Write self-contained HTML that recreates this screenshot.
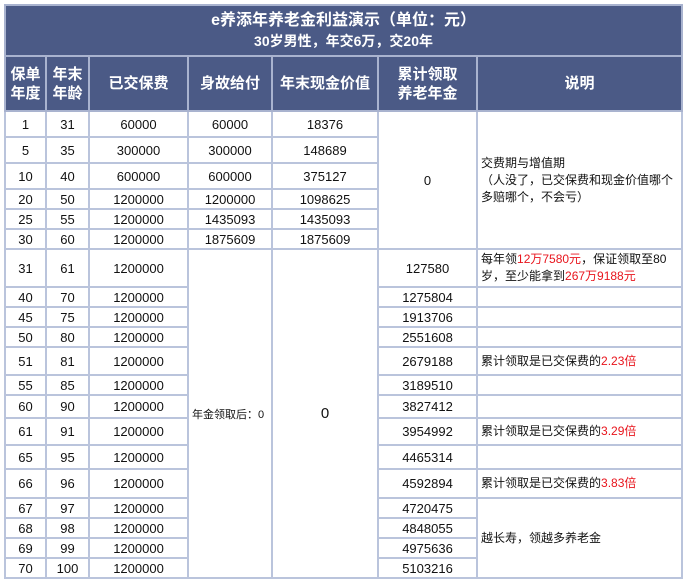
<!DOCTYPE html>
<html><head><meta charset="utf-8"><style>
body{margin:0;background:#fff;}
table{position:absolute;left:4px;top:4px;border-collapse:collapse;table-layout:fixed;width:677px;font-family:"Liberation Sans","Noto Sans CJK SC",sans-serif;font-size:13px;color:#111;}
td{border:2px solid #bac4dc;text-align:center;padding:0;overflow:hidden;white-space:nowrap;}
.h td{background:#4b5a86;color:#fff;border-color:#a9b3cf;font-size:15px;line-height:19px;font-weight:bold;}
.t td{background:#4b5a86;color:#fff;font-size:16px;line-height:21px;border-color:#a9b3cf;font-weight:bold;}
.n{text-align:left;padding-left:3px;font-size:12px;white-space:normal;line-height:17px;}
.r{color:#e8141c;}
</style></head><body>
<table>
<colgroup><col style="width:41px"><col style="width:43px"><col style="width:99px"><col style="width:84px"><col style="width:106px"><col style="width:99px"><col style="width:205px"></colgroup>
<tr class="t" style="height:51px"><td colspan="7">e养添年养老金利益演示（单位：元）<br><span style="font-size:14px">30岁男性，年交6万，交20年</span></td></tr>
<tr class="h" style="height:55px"><td>保单<br>年度</td><td>年末<br>年龄</td><td>已交保费</td><td>身故给付</td><td>年末现金价值</td><td>累计领取<br>养老年金</td><td>说明</td></tr>
<tr style="height:26px"><td>1</td><td>31</td><td>60000</td><td>60000</td><td>18376</td><td rowspan="6">0</td><td rowspan="6" class="n">交费期与增值期<br>（人没了，已交保费和现金价值哪个多赔哪个，不会亏）</td></tr>
<tr style="height:26px"><td>5</td><td>35</td><td>300000</td><td>300000</td><td>148689</td></tr>
<tr style="height:26px"><td>10</td><td>40</td><td>600000</td><td>600000</td><td>375127</td></tr>
<tr style="height:20px"><td>20</td><td>50</td><td>1200000</td><td>1200000</td><td>1098625</td></tr>
<tr style="height:20px"><td>25</td><td>55</td><td>1200000</td><td>1435093</td><td>1435093</td></tr>
<tr style="height:20px"><td>30</td><td>60</td><td>1200000</td><td>1875609</td><td>1875609</td></tr>
<tr style="height:38px"><td>31</td><td>61</td><td>1200000</td><td rowspan="14" style="font-size:11px;text-align:left;padding-left:3px">年金领取后：0</td><td rowspan="14" style="font-size:15px">0</td><td>127580</td><td class="n">每年领<span class="r">12万7580元</span>，保证领取至80岁，至少能拿到<span class="r">267万9188元</span></td></tr>
<tr style="height:20px"><td>40</td><td>70</td><td>1200000</td><td>1275804</td><td></td></tr>
<tr style="height:20px"><td>45</td><td>75</td><td>1200000</td><td>1913706</td><td></td></tr>
<tr style="height:20px"><td>50</td><td>80</td><td>1200000</td><td>2551608</td><td></td></tr>
<tr style="height:28px"><td>51</td><td>81</td><td>1200000</td><td>2679188</td><td class="n">累计领取是已交保费的<span class="r">2.23倍</span></td></tr>
<tr style="height:20px"><td>55</td><td>85</td><td>1200000</td><td>3189510</td><td></td></tr>
<tr style="height:23px"><td>60</td><td>90</td><td>1200000</td><td>3827412</td><td></td></tr>
<tr style="height:27px"><td>61</td><td>91</td><td>1200000</td><td>3954992</td><td class="n">累计领取是已交保费的<span class="r">3.29倍</span></td></tr>
<tr style="height:24px"><td>65</td><td>95</td><td>1200000</td><td>4465314</td><td></td></tr>
<tr style="height:29px"><td>66</td><td>96</td><td>1200000</td><td>4592894</td><td class="n">累计领取是已交保费的<span class="r">3.83倍</span></td></tr>
<tr style="height:20px"><td>67</td><td>97</td><td>1200000</td><td>4720475</td><td rowspan="4" class="n">越长寿，领越多养老金</td></tr>
<tr style="height:20px"><td>68</td><td>98</td><td>1200000</td><td>4848055</td></tr>
<tr style="height:20px"><td>69</td><td>99</td><td>1200000</td><td>4975636</td></tr>
<tr style="height:20px"><td>70</td><td>100</td><td>1200000</td><td>5103216</td></tr>
</table>
</body></html>
